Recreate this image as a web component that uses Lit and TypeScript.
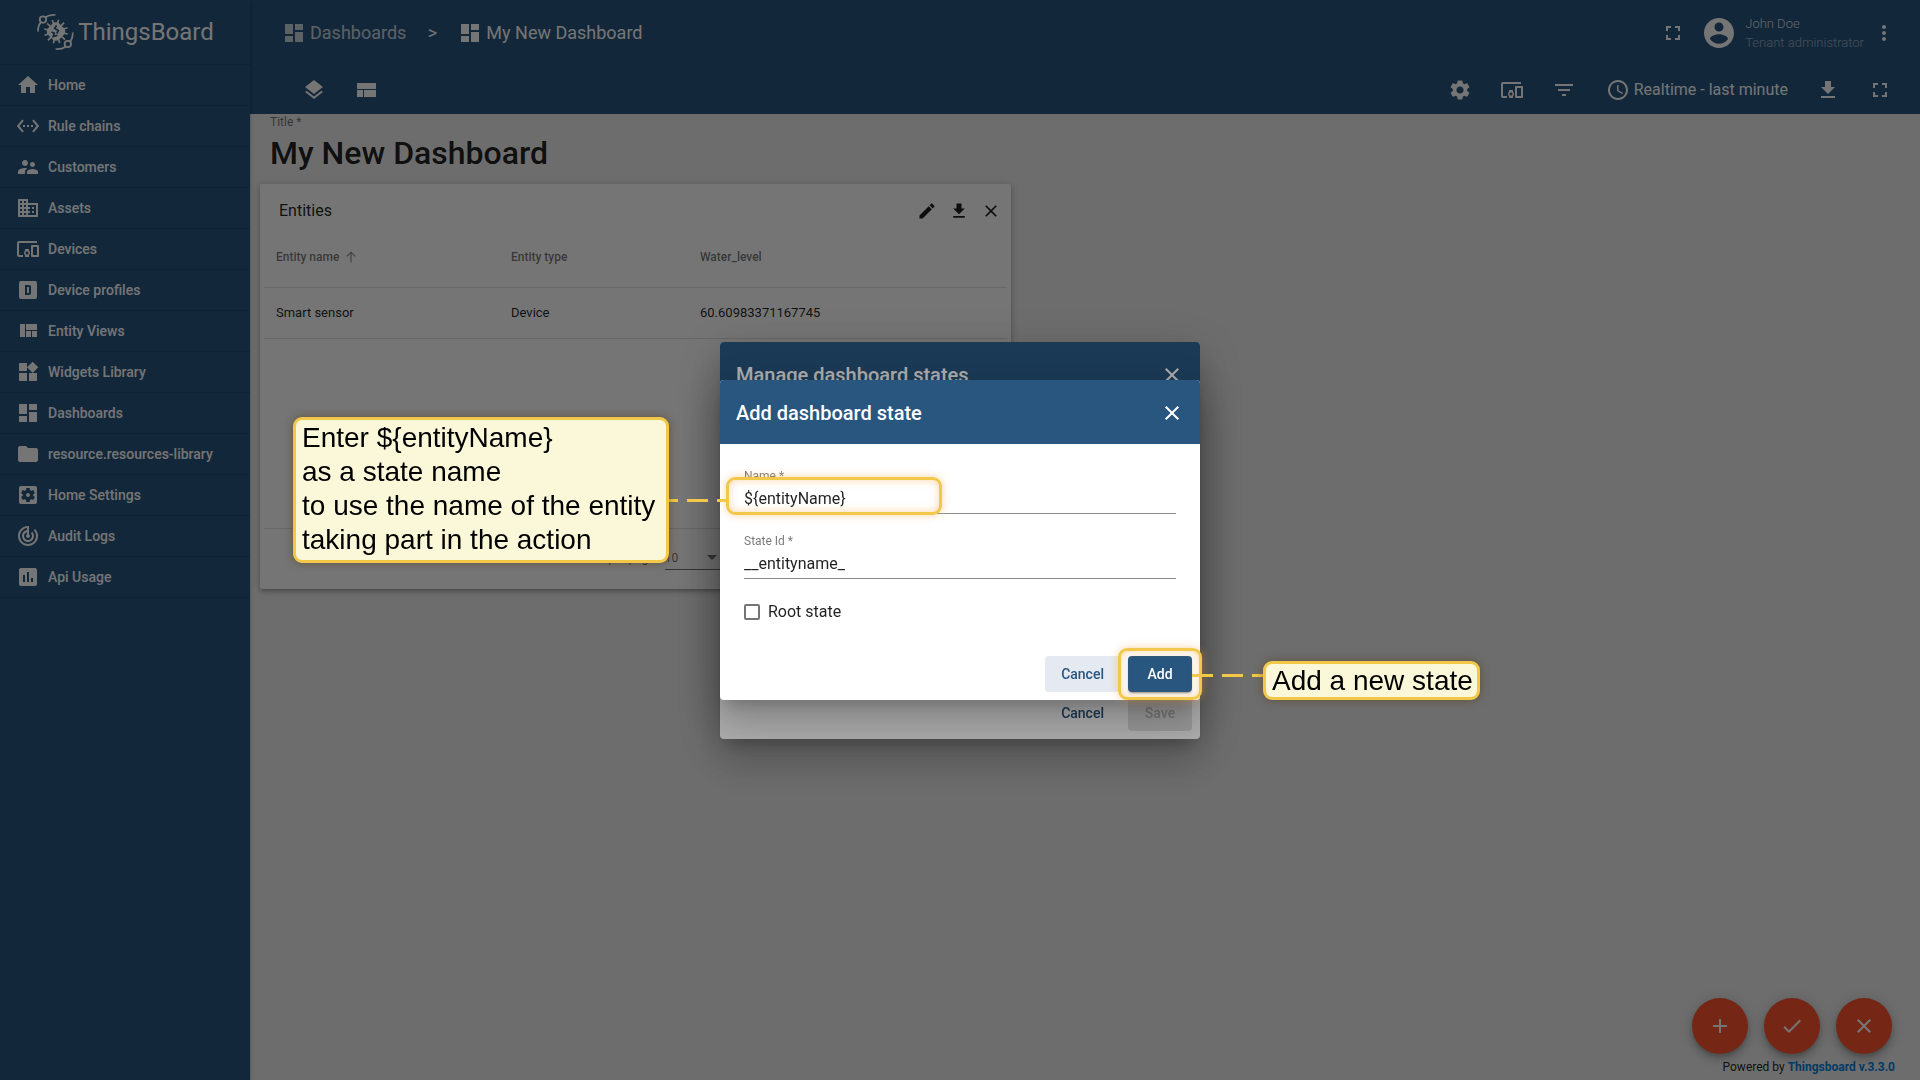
import { LitElement, html, css, svg } from "lit";
import { customElement, property } from "lit/decorators.js";

const ICONS: Record<string, string> = {
  home: "M10 20v-6h4v6h5v-8h3L12 3 2 12h3v8z",
  chains: "M7.77 6.76L6.23 5.48.82 12l5.41 6.52 1.54-1.28L3.42 12l4.35-5.24zM7 13h2v-2H7v2zm10-2h-2v2h2v-2zm-6 2h2v-2h-2v2zm6.77-7.52l-1.54 1.28L20.58 12l-4.35 5.24 1.54 1.28L23.18 12l-5.41-6.52z",
  people: "M16.5 12c1.38 0 2.49-1.12 2.49-2.5S17.88 7 16.5 7C15.12 7 14 8.12 14 9.5s1.12 2.5 2.5 2.5zM9 11c1.66 0 2.99-1.34 2.99-3S10.66 5 9 5C7.34 5 6 6.34 6 8s1.34 3 3 3zm7.5 3c-1.83 0-5.5.92-5.5 2.75V19h11v-2.25c0-1.83-3.67-2.75-5.5-2.75zM9 13c-2.33 0-7 1.17-7 3.5V19h7v-2.25c0-.85.33-2.34 2.37-3.47C10.5 13.1 9.66 13 9 13z",
  domain: "M12 7V3H2v18h20V7H12zM6 19H4v-2h2v2zm0-4H4v-2h2v2zm0-4H4V9h2v2zm0-4H4V5h2v2zm4 12H8v-2h2v2zm0-4H8v-2h2v2zm0-4H8V9h2v2zm0-4H8V5h2v2zm10 12h-8v-2h2v-2h-2v-2h2v-2h-2V9h8v10zm-2-8h-2v2h2v-2zm0 4h-2v2h2v-2z",
  devices: "M3 6h18V4H3c-1.1 0-2 .9-2 2v12c0 1.1.9 2 2 2h4v-2H3V6zm10 6H9v1.78c-.61.55-1 1.33-1 2.22s.39 1.67 1 2.22V20h4v-1.78c.61-.55 1-1.34 1-2.22s-.39-1.67-1-2.22V12zm-2 5.5c-.83 0-1.5-.67-1.5-1.5s.67-1.5 1.5-1.5 1.5.67 1.5 1.5-.67 1.5-1.5 1.5zM22 8h-6c-.5 0-1 .5-1 1v10c0 .5.5 1 1 1h6c.5 0 1-.5 1-1V9c0-.5-.5-1-1-1zm-1 10h-4v-8h4v8z",
  profile: "M5 3h14a2 2 0 0 1 2 2v14a2 2 0 0 1-2 2H5a2 2 0 0 1-2-2V5a2 2 0 0 1 2-2zM9 7v10h4a2 2 0 0 0 2-2V9a2 2 0 0 0-2-2H9zM11 9h2v6h-2V9z",
  quilt: "M10 18h5v-6h-5v6zm-6 0h5V5H4v13zm12 0h5v-6h-5v6zM10 5v6h11V5H10z",
  widgets: "M13 13v8h8v-8h-8zM3 21h8v-8H3v8zM3 3v8h8V3H3zm13.66-1.31L11 7.34 16.66 13l5.66-5.66-5.66-5.65z",
  dashboard: "M3 13h8V3H3v10zm0 8h8v-6H3v6zm10 0h8V11h-8v10zm0-18v6h8V3h-8z",
  folder: "M10 4H4c-1.1 0-1.99.9-1.99 2L2 18c0 1.1.9 2 2 2h16c1.1 0 2-.9 2-2V8c0-1.1-.9-2-2-2h-8l-2-2z",
  homeSettings: "M12 10c-1.1 0-2 .9-2 2s.9 2 2 2 2-.9 2-2-.9-2-2-2zm7-7H5c-1.11 0-2 .9-2 2v14c0 1.1.89 2 2 2h14c1.11 0 2-.9 2-2V5c0-1.1-.89-2-2-2zm-1.75 9c0 .23-.02.46-.05.68l1.48 1.16c.13.11.17.3.08.45l-1.4 2.42c-.09.15-.27.21-.43.15l-1.74-.7c-.36.28-.76.51-1.18.69l-.26 1.85c-.03.17-.18.3-.35.3h-2.8c-.17 0-.32-.13-.35-.29l-.26-1.85c-.43-.18-.82-.41-1.18-.69l-1.74.7c-.16.06-.34 0-.43-.15l-1.4-2.42c-.09-.15-.05-.34.08-.45l1.48-1.16c-.03-.23-.05-.46-.05-.69 0-.23.02-.46.05-.68l-1.48-1.16c-.13-.11-.17-.3-.08-.45l1.4-2.42c.09-.15.27-.21.43-.15l1.74.7c.36-.28.76-.51 1.18-.69l.26-1.85c.03-.17.18-.3.35-.3h2.8c.17 0 .32.13.35.29l.26 1.85c.43.18.82.41 1.18.69l1.74-.7c.16-.06.34 0 .43.15l1.4 2.42c.09.15.05.34-.08.45l-1.48 1.16c.03.23.05.46.05.69z",
  track: "M19.07 4.93l-1.41 1.41C19.1 7.79 20 9.79 20 12c0 4.42-3.58 8-8 8s-8-3.58-8-8c0-4.08 3.05-7.44 7-7.93v2.02C8.16 6.57 6 9.03 6 12c0 3.31 2.69 6 6 6s6-2.69 6-6c0-1.66-.67-3.16-1.76-4.24l-1.41 1.41C15.55 9.9 16 10.9 16 12c0 2.21-1.79 4-4 4s-4-1.79-4-4c0-1.86 1.28-3.41 3-3.86v2.14c-.6.35-1 .98-1 1.72 0 1.1.9 2 2 2s2-.9 2-2c0-.74-.4-1.38-1-1.72V2h-1C6.48 2 2 6.48 2 12s4.48 10 10 10 10-4.48 10-10c0-2.76-1.12-5.26-2.93-7.07z",
  chart: "M19 3H5c-1.1 0-2 .9-2 2v14c0 1.1.9 2 2 2h14c1.1 0 2-.9 2-2V5c0-1.1-.9-2-2-2zM9 17H7v-7h2v7zm4 0h-2V7h2v10zm4 0h-2v-4h2v4z",
  layers: "M11.99 18.54l-7.37-5.73L3 14.07l9 7 9-7-1.63-1.27-7.38 5.74zM12 16l7.36-5.73L21 9l-9-7-9 7 1.63 1.27L12 16z",
  compact: "M3 19h6v-7H3v7zm7 0h12v-7H10v7zM3 5v6h19V5H3z",
  settings: "M19.14 12.94c.04-.3.06-.61.06-.94 0-.32-.02-.64-.07-.94l2.03-1.58c.18-.14.23-.41.12-.61l-1.92-3.32c-.12-.22-.37-.29-.59-.22l-2.39.96c-.5-.38-1.03-.7-1.62-.94l-.36-2.54c-.04-.24-.24-.41-.48-.41h-3.84c-.24 0-.43.17-.47.41l-.36 2.54c-.59.24-1.13.57-1.62.94l-2.39-.96c-.22-.08-.47 0-.59.22L2.74 8.87c-.12.21-.08.47.12.61l2.03 1.58c-.05.3-.09.63-.09.94s.02.64.07.94l-2.03 1.58c-.18.14-.23.41-.12.61l1.92 3.32c.12.22.37.29.59.22l2.39-.96c.5.38 1.03.7 1.62.94l.36 2.54c.05.24.24.41.48.41h3.84c.24 0 .44-.17.47-.41l.36-2.54c.59-.24 1.13-.56 1.62-.94l2.39.96c.22.08.47 0 .59-.22l1.92-3.32c.12-.22.07-.47-.12-.61l-2.01-1.58zM12 15.6c-1.98 0-3.6-1.62-3.6-3.6s1.62-3.6 3.6-3.6 3.6 1.62 3.6 3.6-1.62 3.6-3.6 3.6z",
  filter: "M10 18h4v-2h-4v2zM3 6v2h18V6H3zm3 7h12v-2H6v2z",
  clock: "M11.99 2C6.47 2 2 6.48 2 12s4.47 10 9.99 10C17.52 22 22 17.52 22 12S17.52 2 11.99 2zM12 20c-4.42 0-8-3.58-8-8s3.58-8 8-8 8 3.58 8 8-3.58 8-8 8zm.5-13H11v6l5.25 3.15.75-1.23-4.5-2.67z",
  download: "M19 9h-4V3H9v6H5l7 7 7-7zM5 18v2h14v-2H5z",
  fullscreen: "M7 14H5v5h5v-2H7v-3zm-2-4h2V7h3V5H5v5zm12 7h-3v2h5v-5h-2v3zM14 5v2h3v3h2V5h-5z",
  account: "M12 2C6.48 2 2 6.48 2 12s4.48 10 10 10 10-4.48 10-10S17.52 2 12 2zm0 3c1.66 0 3 1.34 3 3s-1.34 3-3 3-3-1.34-3-3 1.34-3 3-3zm0 14.2c-2.5 0-4.71-1.28-6-3.22.03-1.99 4-3.08 6-3.08 1.99 0 5.97 1.09 6 3.08-1.29 1.94-3.5 3.22-6 3.22z",
  more: "M12 8c1.1 0 2-.9 2-2s-.9-2-2-2-2 .9-2 2 .9 2 2 2zm0 2c-1.1 0-2 .9-2 2s.9 2 2 2 2-.9 2-2-.9-2-2-2zm0 6c-1.1 0-2 .9-2 2s.9 2 2 2 2-.9 2-2-.9-2-2-2z",
  edit: "M3 17.25V21h3.75L17.81 9.94l-3.75-3.75L3 17.25zM20.71 7.04c.39-.39.39-1.02 0-1.41l-2.34-2.34c-.39-.39-1.02-.39-1.41 0l-1.83 1.83 3.75 3.75 1.83-1.83z",
  close: "M19 6.41L17.59 5 12 10.59 6.41 5 5 6.41 10.59 12 5 17.59 6.41 19 12 13.41 17.59 19 19 17.59 13.41 12z",
  add: "M19 13h-6v6h-2v-6H5v-2h6V5h2v6h6v2z",
  done: "M9 16.2L4.8 12l-1.4 1.4L9 19 21 7l-1.4-1.4L9 16.2z",
  sortUp: "M11 20V7.2L6.4 11.800 5 10.400 12 3.400l7 7-1.400 1.400L13 7.200V20z",
};

const NAV: [string, string][] = [
  ["home", "Home"],
  ["chains", "Rule chains"],
  ["people", "Customers"],
  ["domain", "Assets"],
  ["devices", "Devices"],
  ["profile", "Device profiles"],
  ["quilt", "Entity Views"],
  ["widgets", "Widgets Library"],
  ["dashboard", "Dashboards"],
  ["folder", "resource.resources-library"],
  ["homeSettings", "Home Settings"],
  ["track", "Audit Logs"],
  ["chart", "Api Usage"],
];

const base = css`
  * {
    box-sizing: border-box;
  }
  button {
    font: inherit;
    color: inherit;
    background: none;
    border: 0;
    padding: 0;
    cursor: pointer;
  }
  a {
    color: inherit;
    text-decoration: none;
  }
  .icon-button {
    display: flex;
    align-items: center;
    justify-content: center;
    width: 40px;
    height: 40px;
  }
`;

@customElement("tb-icon")
class TbIcon extends LitElement {
  @property() name = "";

  static styles = css`
    :host {
      display: inline-flex;
      flex: none;
      width: 24px;
      height: 24px;
    }
    svg {
      width: 100%;
      height: 100%;
      fill: currentColor;
      fill-rule: evenodd;
    }
  `;

  render() {
    return html`<svg viewBox="0 0 24 24" aria-hidden="true"><path d=${ICONS[this.name]}></path></svg>`;
  }
}

@customElement("tb-sidebar")
class TbSidebar extends LitElement {
  static styles = [
    base,
    css`
      :host {
        display: flex;
        flex-direction: column;
        flex: none;
        width: 250px;
        color: #fff;
        background: #28567f;
        z-index: 1;
        box-shadow: 0 1px 5px rgba(0, 0, 0, 0.2), 0 2px 2px rgba(0, 0, 0, 0.14), 0 3px 1px -2px rgba(0, 0, 0, 0.12);
      }
      .brand {
        display: flex;
        align-items: center;
        justify-content: center;
        gap: 4px;
        height: 64px;
        font-size: 24px;
        line-height: 32px;
      }
      .brand svg {
        width: 38px;
        height: 38px;
      }
      ul {
        margin: 0;
        padding: 0;
        list-style: none;
        border-top: 1px solid rgba(0, 0, 0, 0.12);
      }
      li {
        border-bottom: 1px solid rgba(0, 0, 0, 0.12);
      }
      .link {
        display: flex;
        align-items: center;
        gap: 8px;
        height: 40px;
        padding: 0 16px;
        font-size: 14px;
        font-weight: 500;
        white-space: nowrap;
      }
    `,
  ];

  private logo() {
    const teeth = [0, 30, 60, 90, 120, 150, 180, 210, 240, 270, 300, 330];
    return html`<svg viewBox="0 0 38 38" fill="none" stroke="currentColor" aria-hidden="true">
      <path d="M19.500 2C15.500 1.600 12 2.500 9.300 4.300M4.800 9C2.600 12 1.900 15 2 18.500" stroke-width="1.700" />
      <circle cx="7" cy="6.600" r="3.200" stroke-width="1.800" />
      <path d="M19.500 36C23.500 36.400 27 35.500 29.700 33.700M34.200 29C36.200 26 36.900 23 36.800 19.500" stroke-width="1.700" />
      <circle cx="31.800" cy="31" r="3.200" stroke-width="1.800" />
      <g transform="rotate(12 20 18.500)">
        ${teeth.map((a) => svg`<path d="M20 12V6.500" stroke-width="1.700" transform="rotate(${a} 20 18.500)" />`)}
      </g>
      <rect x="12" y="10.500" width="16" height="16" rx="5" transform="rotate(45 20 18.500)" fill="currentColor" stroke="none" />
      <path d="M20.500 12.500L18.700 15.500L22.300 17.500L20.800 20.500M15.500 19L18.300 20.300L17.300 23.500L21.500 22.300" stroke="#28567f" stroke-width="1.700" />
    </svg>`;
  }

  render() {
    return html`
      <div class="brand">${this.logo()}<span>ThingsBoard</span></div>
      <nav aria-label="Main">
        <ul>
          ${NAV.map(
            ([icon, label]) => html`<li><a class="link" href="#"><tb-icon name=${icon}></tb-icon><span>${label}</span></a></li>`
          )}
        </ul>
      </nav>
    `;
  }
}

@customElement("tb-header")
class TbHeader extends LitElement {
  static styles = [
    base,
    css`
      :host {
        display: block;
        color: #fff;
        background: #28567f;
      }
      .top,
      .tools,
      .crumbs,
      .crumb,
      .user,
      .group,
      .time {
        display: flex;
        align-items: center;
      }
      .top {
        justify-content: space-between;
        height: 64px;
        padding: 1px 16px 0 32px;
      }
      .crumbs {
        font-size: 18px;
        line-height: 24px;
      }
      .crumb {
        gap: 4px;
      }
      .parent {
        opacity: 0.75;
      }
      .separator {
        width: 52px;
        text-align: center;
        font-size: 18px;
      }
      .avatar {
        width: 36px;
        height: 36px;
        margin: 0 8px;
      }
      .who {
        display: flex;
        flex-direction: column;
        font-size: 13px;
        font-weight: 300;
        line-height: 19px;
      }
      .name {
        opacity: 0.8;
      }
      .role {
        opacity: 0.5;
      }
      .tools {
        justify-content: space-between;
        height: 50px;
        padding: 2px 20px 0 44px;
      }
      .group {
        gap: 12px;
      }
      .time {
        gap: 4px;
        height: 40px;
        padding: 0 8px 0 10px;
        font-size: 16px;
      }
    `,
  ];

  private tool(icon: string, label: string) {
    return html`<button class="icon-button" aria-label=${label}><tb-icon name=${icon}></tb-icon></button>`;
  }

  render() {
    return html`
      <div class="top">
        <nav class="crumbs" aria-label="Breadcrumb">
          <a class="crumb parent" href="#"><tb-icon name="dashboard"></tb-icon><span>Dashboards</span></a>
          <span class="separator">&gt;</span>
          <a class="crumb" href="#"><tb-icon name="dashboard"></tb-icon><span>My New Dashboard</span></a>
        </nav>
        <div class="user">
          ${this.tool("fullscreen", "Fullscreen")}
          <tb-icon class="avatar" name="account"></tb-icon>
          <div class="who"><span class="name">John Doe</span><span class="role">Tenant administrator</span></div>
          ${this.tool("more", "User menu")}
        </div>
      </div>
      <div class="tools">
        <div class="group">${this.tool("layers", "Manage dashboard states")}${this.tool("compact", "Manage layouts")}</div>
        <div class="group">
          ${this.tool("settings", "Settings")}${this.tool("devices", "Entity aliases")}${this.tool("filter", "Filters")}
          <button class="time"><tb-icon name="clock"></tb-icon><span>Realtime - last minute</span></button>
          ${this.tool("download", "Export dashboard")}${this.tool("fullscreen", "Expand dashboard")}
        </div>
      </div>
    `;
  }
}

@customElement("tb-entities-widget")
class TbEntitiesWidget extends LitElement {
  static styles = [
    base,
    css`
      :host {
        display: flex;
        flex-direction: column;
        width: 45.5%;
        height: 405px;
        padding: 4px;
        color: rgba(0, 0, 0, 0.87);
        background: #fff;
        border-radius: 2px;
        box-shadow: 0 1px 8px rgba(0, 0, 0, 0.2), 0 3px 4px rgba(0, 0, 0, 0.14), 0 3px 3px -2px rgba(0, 0, 0, 0.12);
      }
      .head {
        display: flex;
        align-items: center;
        justify-content: space-between;
        height: 44px;
        padding: 1px 0 0 15px;
        font-size: 16px;
      }
      .actions {
        display: flex;
      }
      .action {
        width: 32px;
        height: 32px;
      }
      .action tb-icon {
        width: 20px;
        height: 20px;
      }
      h2 {
        margin: 0;
        font-size: 16px;
        font-weight: 400;
      }
      table {
        width: 100%;
        border-collapse: collapse;
        table-layout: fixed;
        font-size: 13px;
        text-align: left;
      }
      .wide {
        width: 235px;
      }
      .mid {
        width: 189px;
      }
      th,
      td {
        padding: 0 0 0 12px;
        border-bottom: 1px solid rgba(0, 0, 0, 0.12);
      }
      th {
        height: 55px;
        padding-bottom: 4px;
        font-size: 12px;
        font-weight: 500;
        color: rgba(0, 0, 0, 0.54);
      }
      td {
        height: 51px;
      }
      .sort {
        display: inline-flex;
        align-items: center;
        gap: 4px;
      }
      .sort tb-icon {
        width: 16px;
        height: 16px;
        color: rgba(0, 0, 0, 0.4);
      }
      .foot {
        display: flex;
        align-items: center;
        gap: 10px;
        flex: none;
        height: 57px;
        margin-top: auto;
        padding: 2px 0 0 311px;
        border-top: 1px solid rgba(0, 0, 0, 0.12);
        font-size: 12px;
        color: rgba(0, 0, 0, 0.54);
      }
      .size {
        display: flex;
        align-items: center;
        width: 56px;
        height: 24px;
        border-bottom: 1px solid rgba(0, 0, 0, 0.54);
      }
      select {
        appearance: none;
        flex: 1;
        min-width: 0;
        font: inherit;
        color: inherit;
        background: none;
        border: 0;
        padding: 0;
      }
      .arrow {
        border: 5px solid transparent;
        border-top-color: currentColor;
        border-bottom: 0;
        margin-right: 4px;
      }
    `,
  ];

  render() {
    const actions: [string, string][] = [["edit", "Edit widget"], ["download", "Export widget"], ["close", "Remove widget"]];
    return html`
      <div class="head">
        <h2>Entities</h2>
        <div class="actions">
          ${actions.map(([icon, label]) => html`<button class="icon-button action" aria-label=${label}><tb-icon name=${icon}></tb-icon></button>`)}
        </div>
      </div>
      <table>
        <colgroup><col class="wide" /><col class="mid" /><col /></colgroup>
        <thead>
          <tr><th><span class="sort">Entity name <tb-icon name="sortUp"></tb-icon></span></th><th>Entity type</th><th>Water_level</th></tr>
        </thead>
        <tbody>
          <tr><td>Smart sensor</td><td>Device</td><td>60.60983371167745</td></tr>
        </tbody>
      </table>
      <div class="foot">
        <label for="page-size">Items per page</label>
        <div class="size"><select id="page-size"><option>10</option></select><span class="arrow"></span></div>
      </div>
    `;
  }
}

@customElement("tb-dialog")
class TbDialog extends LitElement {
  @property() heading = "";

  static styles = [
    base,
    css`
      :host {
        position: fixed;
        inset: 0;
        z-index: 2;
        display: flex;
        align-items: center;
        justify-content: center;
        background: rgba(0, 0, 0, 0.32);
      }
      .panel {
        width: 480px;
        max-width: 80vw;
        overflow: hidden;
        border-radius: 4px;
        color: rgba(0, 0, 0, 0.87);
        background: #fff;
        box-shadow: 0 11px 15px -7px rgba(0, 0, 0, 0.2), 0 24px 38px 3px rgba(0, 0, 0, 0.14), 0 9px 46px 8px rgba(0, 0, 0, 0.12);
      }
      .bar {
        display: flex;
        align-items: center;
        justify-content: space-between;
        height: 64px;
        padding: 2px 8px 0 16px;
        color: #fff;
        background: #28567f;
      }
      h2 {
        margin: 0;
        font-size: 20px;
        font-weight: 500;
      }
      .actions {
        display: flex;
        justify-content: flex-end;
        gap: 8px;
        padding: 8px;
      }
    `,
  ];

  render() {
    return html`
      <section class="panel" role="dialog" aria-label=${this.heading}>
        <div class="bar">
          <h2>${this.heading}</h2>
          <button class="icon-button" aria-label="Close"><tb-icon name="close"></tb-icon></button>
        </div>
        <slot></slot>
        <div class="actions"><slot name="actions"></slot></div>
      </section>
    `;
  }
}

@customElement("app-root")
class AppRoot extends LitElement {
  static styles = [
    base,
    css`
      :host {
        display: flex;
        min-height: 100vh;
        font-family: Roboto, "Liberation Sans", sans-serif;
        font-size: 16px;
        line-height: 20px;
        background: #eee;
        -webkit-font-smoothing: antialiased;
      }
      .main {
        display: flex;
        flex-direction: column;
        flex: 1;
        min-width: 0;
      }
      .board {
        flex: 1;
        padding: 0 10px;
      }
      .title {
        display: flex;
        flex-direction: column;
        height: 70px;
        padding: 0 10px;
        font-size: 12px;
        line-height: 16px;
        color: rgba(0, 0, 0, 0.54);
      }
      .title input {
        width: 100%;
        height: 40px;
        margin-top: 3px;
        padding: 0;
        border: 0;
        background: none;
        outline: none;
        font: 500 32px/40px Roboto, "Liberation Sans", sans-serif;
        color: rgba(0, 0, 0, 0.87);
      }
      .fabs {
        display: flex;
        justify-content: flex-end;
        gap: 16px;
        padding: 0 28px;
      }
      .fab {
        display: flex;
        align-items: center;
        justify-content: center;
        width: 56px;
        height: 56px;
        border-radius: 50%;
        color: #fff;
        background: #ff5430;
        box-shadow: 0 3px 5px -1px rgba(0, 0, 0, 0.2), 0 6px 10px rgba(0, 0, 0, 0.14), 0 1px 18px rgba(0, 0, 0, 0.12);
      }
      .powered {
        padding: 4px 25px;
        text-align: right;
        font-size: 12px;
        line-height: 18px;
        color: rgba(0, 0, 0, 0.87);
      }
      .powered a {
        font-weight: 700;
        color: #0680dc;
      }
      .form {
        display: flex;
        flex-direction: column;
        gap: 9px;
        height: 204px;
        padding: 24px 24px 0;
      }
      .field {
        display: flex;
        flex-direction: column;
        height: 46px;
        border-bottom: 1px solid rgba(0, 0, 0, 0.45);
        margin-bottom: 10px;
        font-size: 12px;
        line-height: 16px;
        color: rgba(0, 0, 0, 0.54);
      }
      .field input {
        height: 28px;
        padding: 0;
        border: 0;
        outline: none;
        background: none;
        font: 400 16px/20px Roboto, "Liberation Sans", sans-serif;
        color: rgba(0, 0, 0, 0.87);
      }
      .check {
        display: flex;
        align-items: center;
        gap: 8px;
        margin-top: 4px;
      }
      .check input {
        appearance: none;
        width: 16px;
        height: 16px;
        margin: 0;
        border: 2px solid rgba(0, 0, 0, 0.54);
        border-radius: 2px;
      }
      .states {
        height: 281px;
      }
      .button {
        height: 36px;
        min-width: 64px;
        padding: 0 16px;
        border-radius: 4px;
        font-size: 14px;
        font-weight: 500;
        color: #28567f;
      }
      .focused {
        background: #e5eaf2;
      }
      .raised {
        color: #fff;
        background: #28567f;
        box-shadow: 0 3px 1px -2px rgba(0, 0, 0, 0.2), 0 2px 2px rgba(0, 0, 0, 0.14), 0 1px 5px rgba(0, 0, 0, 0.12);
      }
      .disabled {
        color: rgba(0, 0, 0, 0.26);
        background: rgba(0, 0, 0, 0.12);
      }
      /* Tutorial notes are pinned to the centre of the window, like the dialogs. */
      .notes {
        position: fixed;
        left: 50%;
        top: 50%;
        z-index: 3;
        width: 0;
        height: 0;
        pointer-events: none;
      }
      .note,
      .ring,
      .dash {
        position: absolute;
      }
      .note {
        padding: 1px 6px 3px;
        border: 3px solid #f2c84b;
        border-radius: 9px;
        background: #fbf7d9;
        box-shadow: 0 0 8px rgba(80, 50, 0, 0.5);
        font-family: "Liberation Sans", Arial, sans-serif;
        font-size: 28px;
        line-height: 34px;
        white-space: nowrap;
        color: #000;
      }
      .ring {
        border: 3px solid #f2c84b;
        border-radius: 9px;
        box-shadow: 0 0 8px rgba(245, 160, 50, 0.45), inset 0 0 8px rgba(245, 160, 50, 0.45);
      }
      .dash {
        height: 3px;
        background: repeating-linear-gradient(90deg, #f2c84b 0 21px, transparent 21px 30px);
      }
      .note-name {
        left: -667px;
        top: -123px;
        width: 376px;
      }
      .dash-name {
        left: -303px;
        top: -41px;
        width: 69px;
      }
      .ring-name {
        left: -234px;
        top: -63px;
        width: 216px;
        height: 38px;
      }
      .note-add {
        left: 303px;
        top: 121px;
        width: 217px;
        height: 39px;
        padding: 0 6px;
      }
      .dash-add {
        left: 232px;
        top: 134px;
        width: 72px;
      }
      .ring-add {
        left: 158px;
        top: 108px;
        width: 84px;
        height: 52px;
      }
    `,
  ];

  render() {
    return html`
      <tb-sidebar></tb-sidebar>
      <div class="main">
        <tb-header></tb-header>
        <main class="board">
          <div class="title">
            <label for="title">Title *</label>
            <input id="title" value="My New Dashboard" />
          </div>
          <tb-entities-widget></tb-entities-widget>
        </main>
        <div class="fabs">
          ${[["add", "Add widget"], ["done", "Apply changes"], ["close", "Decline changes"]].map(
            ([icon, label]) => html`<button class="fab" aria-label=${label}><tb-icon name=${icon}></tb-icon></button>`
          )}
        </div>
        <footer class="powered">Powered by <a href="#">Thingsboard v.3.3.0</a></footer>
      </div>

      <tb-dialog heading="Manage dashboard states">
        <div class="states"></div>
        <button slot="actions" class="button">Cancel</button>
        <button slot="actions" class="button disabled" disabled>Save</button>
      </tb-dialog>

      <tb-dialog heading="Add dashboard state">
        <div class="form">
          <div class="field">
            <label for="state-name">Name *</label>
            <input id="state-name" .value=${"${entityName}"} />
          </div>
          <div class="field">
            <label for="state-id">State Id *</label>
            <input id="state-id" value="__entityname_" />
          </div>
          <label class="check"><input type="checkbox" /><span>Root state</span></label>
        </div>
        <button slot="actions" class="button focused">Cancel</button>
        <button slot="actions" class="button raised">Add</button>
      </tb-dialog>

      <div class="notes">
        <div class="ring ring-name"></div>
        <div class="dash dash-name"></div>
        <div class="note note-name">
          Enter ${"${entityName}"}<br />as a state name<br />to use the name of the entity<br />taking part in the action
        </div>
        <div class="ring ring-add"></div>
        <div class="dash dash-add"></div>
        <div class="note note-add">Add a new state</div>
      </div>
    `;
  }
}
